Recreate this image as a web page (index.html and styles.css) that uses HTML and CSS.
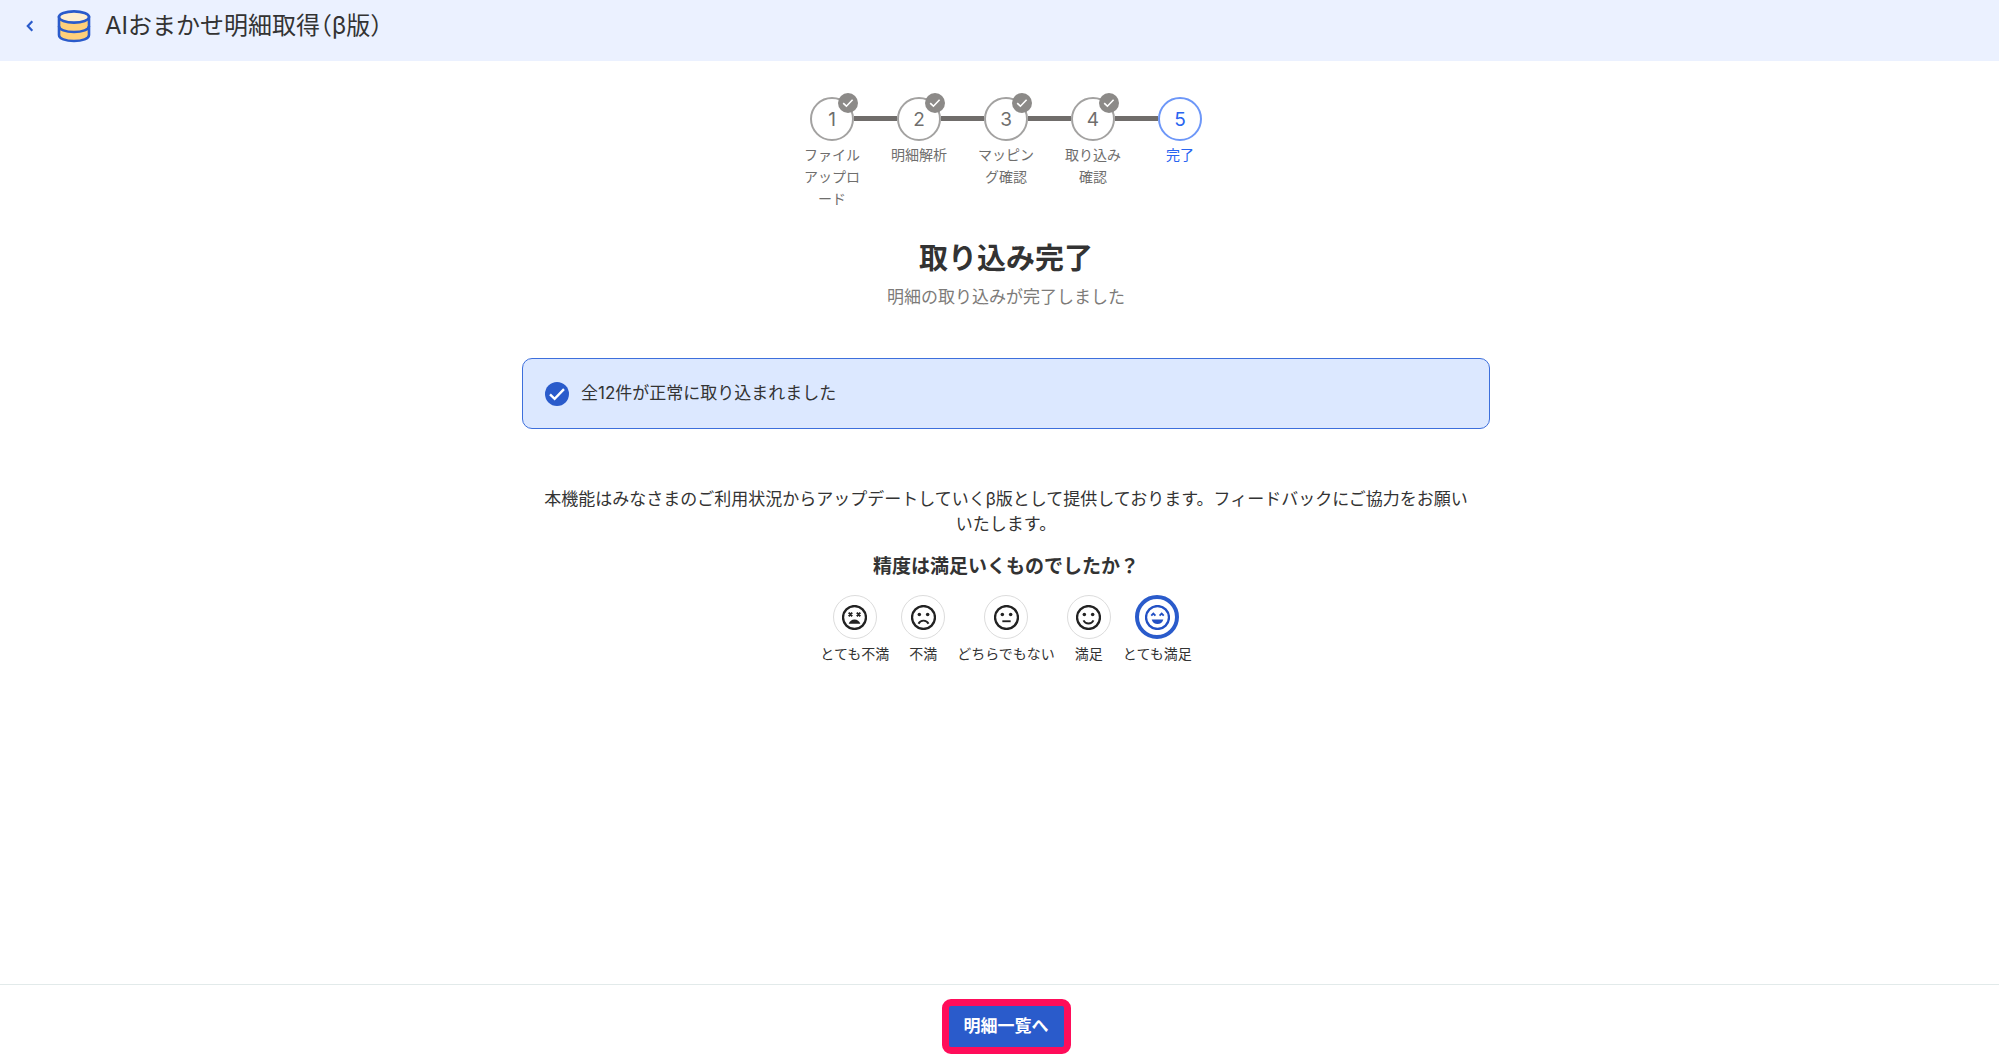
FILE: index.html
```
<!DOCTYPE html>
<html lang="ja">
<head>
    <meta charset="UTF-8">
    <meta name="viewport" content="width=device-width, initial-scale=1.0">
    <title>AIおまかせ明細取得（β版）</title>
    <link rel="stylesheet" href="styles.css">
</head>
<body>
    <header class="header">
        <a href="#" class="back" aria-label="戻る">
            <svg width="8" height="12" viewBox="0 0 8 12"><path d="M6.3 1.3 L1.8 6 L6.3 10.7" fill="none" stroke="#2a5bcb" stroke-width="2.2"/></svg>
        </a>
        <svg class="logo" width="34" height="34" viewBox="0 0 34 34" stroke="#2a5bcb" stroke-width="2.6">
            <path d="M2 8 V26 C2 29.6 8.7 32 17 32 S32 29.6 32 26 V8 Z" fill="#ffd079"/>
            <path d="M2 17 C2 20.6 8.7 23 17 23 S32 20.6 32 17" fill="none"/>
            <ellipse cx="17" cy="8" rx="15" ry="5.6" fill="#ffefd0"/>
        </svg>
        <h1 class="title">AIおまかせ明細取得（β版）</h1>
    </header>

    <main class="main">
        <ol class="steps">
            <li class="step">
                <span class="circle">1<svg class="badge" viewBox="0 0 20 20"><circle cx="10" cy="10" r="10"/><path d="M5.2 10.2 L8.4 13.2 L14.6 6.8"/></svg></span>
                <span class="step-label">ファイルアップロード</span>
            </li>
            <li class="step">
                <span class="circle">2<svg class="badge" viewBox="0 0 20 20"><circle cx="10" cy="10" r="10"/><path d="M5.2 10.2 L8.4 13.2 L14.6 6.8"/></svg></span>
                <span class="step-label">明細解析</span>
            </li>
            <li class="step">
                <span class="circle">3<svg class="badge" viewBox="0 0 20 20"><circle cx="10" cy="10" r="10"/><path d="M5.2 10.2 L8.4 13.2 L14.6 6.8"/></svg></span>
                <span class="step-label">マッピング確認</span>
            </li>
            <li class="step">
                <span class="circle">4<svg class="badge" viewBox="0 0 20 20"><circle cx="10" cy="10" r="10"/><path d="M5.2 10.2 L8.4 13.2 L14.6 6.8"/></svg></span>
                <span class="step-label">取り込み確認</span>
            </li>
            <li class="step current" aria-current="step">
                <span class="circle">5</span>
                <span class="step-label">完了</span>
            </li>
        </ol>

        <h2 class="heading">取り込み完了</h2>
        <p class="sub">明細の取り込みが完了しました</p>

        <div class="alert" role="status">
            <svg width="24" height="24" viewBox="0 0 24 24"><circle cx="12" cy="12" r="12" fill="#2a5bcb"/><path d="M5 12.4 L9.6 16.8 L19 7.2" fill="none" stroke="#fff" stroke-width="2.4"/></svg>
            <span>全12件が正常に取り込まれました</span>
        </div>

        <p class="note">本機能はみなさまのご利用状況からアップデートしていくβ版として提供しております。フィードバックにご協力をお願いいたします。</p>

        <fieldset class="survey">
            <legend class="question">精度は満足いくものでしたか？</legend>
            <div class="rates">
                <label class="rate">
                    <input type="radio" name="rate" value="1">
                    <span class="face">
                        <svg viewBox="0 0 24 24"><circle class="ring" cx="12" cy="12" r="11"/><path class="thin" d="M6.4 7.4 L9.8 10.8 M9.8 7.4 L6.4 10.8 M14.2 7.4 L17.6 10.8 M17.6 7.4 L14.2 10.8"/><path class="fill" d="M6.4 18 C7.2 15.4 9.4 13.8 12 13.8 S16.8 15.4 17.6 18 Z"/></svg>
                    </span>
                    <span>とても不満</span>
                </label>
                <label class="rate">
                    <input type="radio" name="rate" value="2">
                    <span class="face">
                        <svg viewBox="0 0 24 24"><circle class="ring" cx="12" cy="12" r="11"/><circle class="fill" cx="8" cy="9.2" r="1.7"/><circle class="fill" cx="16" cy="9.2" r="1.7"/><path class="line" d="M7.2 18 C8.2 15.9 10 15 12 15 S15.8 15.9 16.8 18"/></svg>
                    </span>
                    <span>不満</span>
                </label>
                <label class="rate">
                    <input type="radio" name="rate" value="3">
                    <span class="face">
                        <svg viewBox="0 0 24 24"><circle class="ring" cx="12" cy="12" r="11"/><circle class="fill" cx="8" cy="9.2" r="1.7"/><circle class="fill" cx="16" cy="9.2" r="1.7"/><path class="line" d="M8 15.6 H16"/></svg>
                    </span>
                    <span>どちらでもない</span>
                </label>
                <label class="rate">
                    <input type="radio" name="rate" value="4">
                    <span class="face">
                        <svg viewBox="0 0 24 24"><circle class="ring" cx="12" cy="12" r="11"/><circle class="fill" cx="8" cy="9.2" r="1.7"/><circle class="fill" cx="16" cy="9.2" r="1.7"/><path class="line" d="M7.2 14.8 C8.2 16.9 10 17.8 12 17.8 S15.8 16.9 16.8 14.8"/></svg>
                    </span>
                    <span>満足</span>
                </label>
                <label class="rate">
                    <input type="radio" name="rate" value="5" checked>
                    <span class="face">
                        <svg viewBox="0 0 24 24"><circle class="ring" cx="12" cy="12" r="11"/><path class="thin" d="M6 10.2 L8 8.2 L10 10.2 M14 10.2 L16 8.2 L18 10.2"/><path class="fill" d="M6.4 13.8 H17.6 C16.8 16.6 14.6 18.2 12 18.2 S7.2 16.6 6.4 13.8 Z"/></svg>
                    </span>
                    <span>とても満足</span>
                </label>
            </div>
        </fieldset>
    </main>

    <footer class="footer">
        <button type="button" class="btn">明細一覧へ</button>
    </footer>
</body>
</html>
```
FILE: styles.css
```
* {
    box-sizing: border-box;
    margin: 0;
    padding: 0;
}
body {
    min-height: 100vh;
    display: flex;
    flex-direction: column;
    background-color: #fff;
    color: #333;
    font-family: Inter, "Noto Sans CJK JP", sans-serif;
    font-size: 17px;
    line-height: 25px;
}

/* header */
.header {
    display: flex;
    align-items: center;
    background-color: #ebf1ff;
    padding: 8px 26px 17px;
}
.back {
    display: flex;
    margin-right: 23px;
}
.logo {
    margin-right: 14px;
}
.title {
    font-size: 24px;
    line-height: 36px;
    font-weight: 400;
    font-feature-settings: "halt";
}

.main {
    flex: 1;
    display: flex;
    flex-direction: column;
    align-items: center;
    padding: 36px 0 36px 13px;
}

/* steps */
.steps {
    display: flex;
    gap: 27px;
    list-style: none;
    color: #6f6e6d;
}
.step {
    position: relative;
    width: 60px;
    display: flex;
    flex-direction: column;
    align-items: center;
    gap: 3px;
}
.step:not(:last-child)::after {
    content: "";
    position: absolute;
    top: 19px;
    left: 52px;
    width: 43px;
    height: 5px;
    background-color: #706d6b;
}
.circle {
    position: relative;
    width: 44px;
    height: 44px;
    display: flex;
    align-items: center;
    justify-content: center;
    border: 2px solid #a3a2a1;
    border-radius: 50%;
    background-color: #fff;
    font-size: 19px;
}
.badge {
    position: absolute;
    top: -6px;
    right: -6px;
    width: 20px;
    height: 20px;
    fill: #8c8a88;
}
.badge path {
    fill: none;
    stroke: #fff;
    stroke-width: 1.6;
}
.step-label {
    font-size: 14px;
    line-height: 22px;
    text-align: center;
    line-break: anywhere;
}
.current {
    color: #2864f0;
}
.current .circle {
    border-color: #6d97f8;
}

.heading {
    margin-top: 29px;
    font-size: 29px;
    line-height: 40px;
    font-weight: 700;
}
.sub {
    margin-top: 6px;
    color: #7d7b79;
}

.alert {
    width: 968px;
    max-width: 100%;
    margin-top: 48px;
    padding: 22px;
    display: flex;
    align-items: center;
    gap: 12px;
    border: 1px solid #3d6fdc;
    border-radius: 10px;
    background-color: #dce8ff;
}

.note {
    width: 968px;
    max-width: 100%;
    margin-top: 58px;
    padding: 0 20px;
    text-align: center;
}

/* survey */
.survey {
    margin-top: 16px;
    border: none;
}
.question {
    margin: 0 auto;
    font-size: 19px;
    line-height: 28px;
    font-weight: 700;
}
.rates {
    display: flex;
    justify-content: center;
    gap: 12px;
    margin-top: 14px;
}
.rate {
    position: relative;
    display: flex;
    flex-direction: column;
    align-items: center;
    gap: 5px;
    font-size: 14px;
    line-height: 20px;
    cursor: pointer;
}
.rate input {
    position: absolute;
    opacity: 0;
}
.face {
    width: 44px;
    height: 44px;
    display: flex;
    align-items: center;
    justify-content: center;
    border: 1px solid #dcdcdc;
    border-radius: 50%;
    color: #222;
}
.face svg {
    width: 25px;
    height: 25px;
    fill: none;
    stroke: currentColor;
    stroke-width: 2.2;
}
.face .line {
    stroke-width: 1.8;
}
.face .thin {
    stroke-width: 1.8;
}
.face .fill {
    fill: currentColor;
    stroke: none;
}
.rate input:checked + .face {
    border: 4px solid #2a5bcb;
    color: #2250c4;
}
.rate input:focus-visible + .face {
    outline: 2px solid #2864f0;
}

/* footer */
.footer {
    display: flex;
    justify-content: center;
    padding: 14px 0 8px 13px;
    border-top: 1px solid #e2eaea;
}
.btn {
    padding: 8px 15px;
    border: 7px solid #ff0d5a;
    border-radius: 9px;
    background-color: #2a5bcb;
    color: #fff;
    font-family: inherit;
    font-size: 17px;
    line-height: 25px;
    font-weight: 700;
    cursor: pointer;
}
```
